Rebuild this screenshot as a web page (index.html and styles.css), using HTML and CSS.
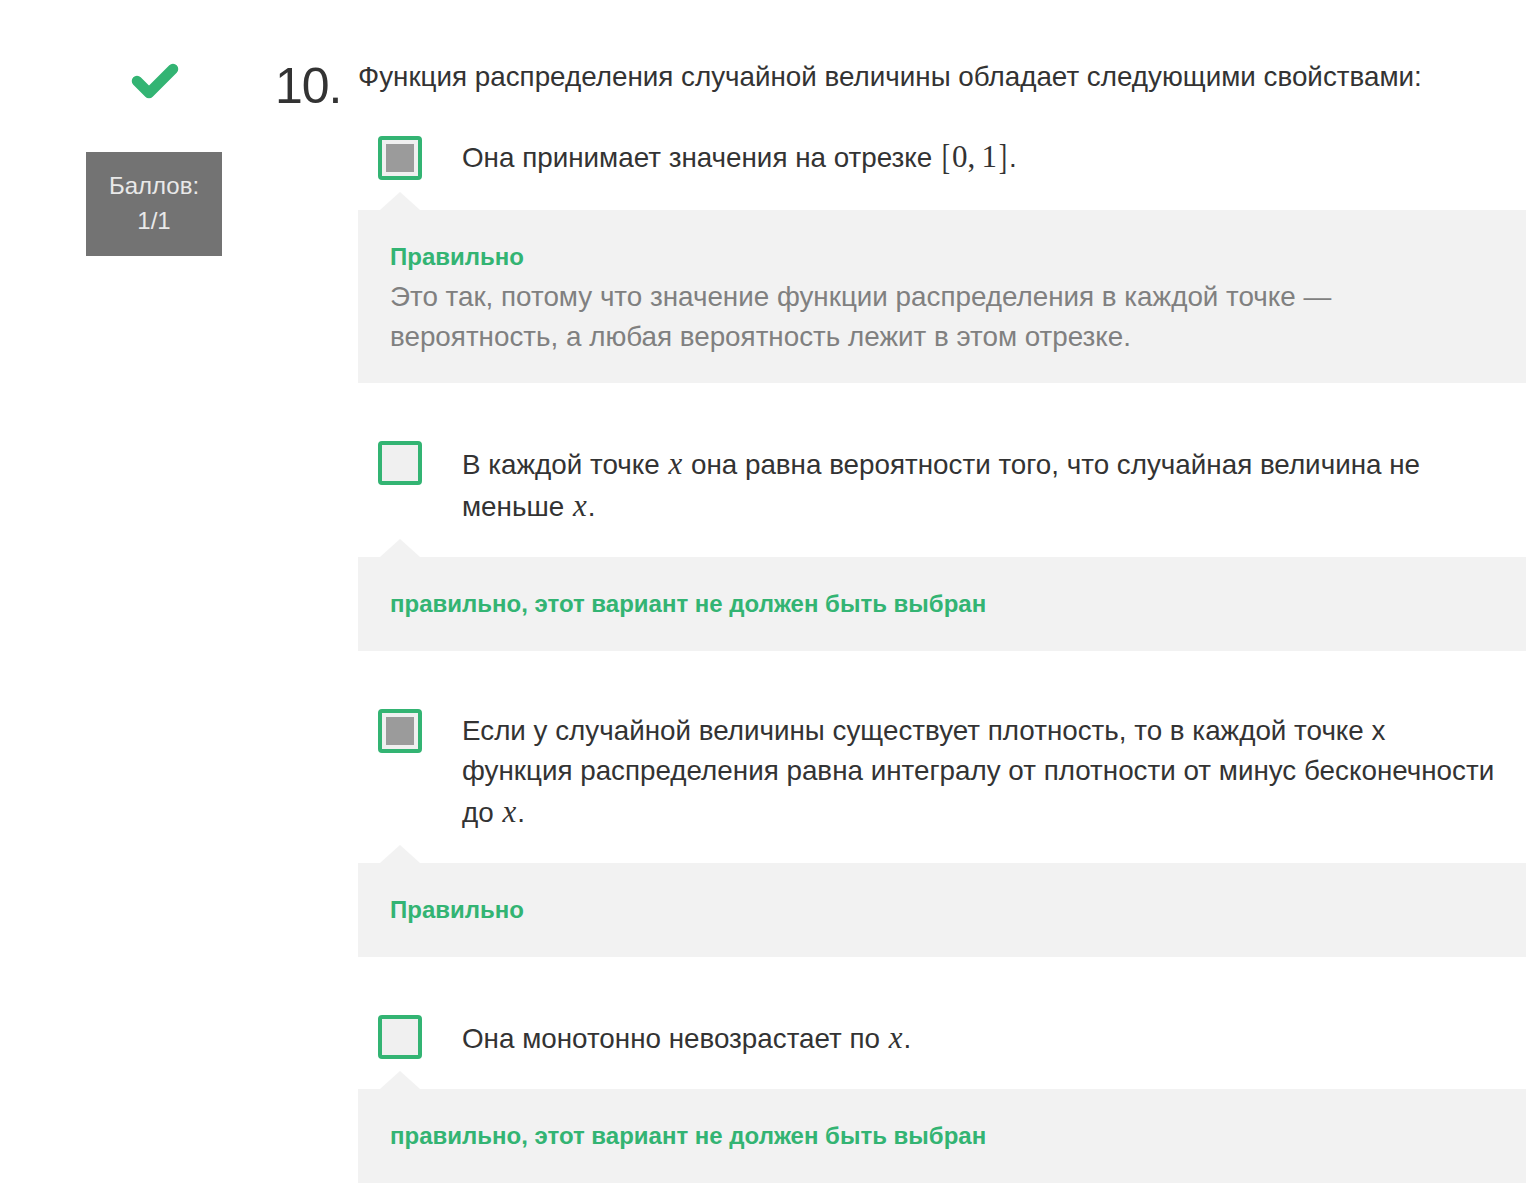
FILE: index.html
```html
<!DOCTYPE html>
<html lang="ru">
<head>
<meta charset="utf-8">
<title>Вопрос 10</title>
<link rel="stylesheet" href="styles.css">
</head>
<body>
<div class="page">
  <aside class="status">
    <svg class="check" width="48" height="38" viewBox="0 0 48 38" aria-hidden="true">
      <polyline points="6,18 18,30 42,6" fill="none" stroke="#33b473" stroke-width="10.5" stroke-linecap="round" stroke-linejoin="round"/>
    </svg>
    <div class="score">
      <div>Баллов:</div>
      <div>1/1</div>
    </div>
  </aside>

  <section class="question">
    <div class="qnum">10.</div>
    <div class="qbody">
      <div class="qtext">Функция распределения случайной величины обладает следующими свойствами:</div>
      <ul class="options">
        <li class="option">
          <div class="answer">
            <span class="box checked"></span>
            <div class="atext">Она принимает значения на отрезке <span class="math"><span class="br">[</span>0,&#8201;1<span class="br">]</span></span>.</div>
          </div>
          <div class="feedback">
            <div class="verdict">Правильно</div>
            <div class="explain">Это так, потому что значение функции распределения в каждой точке — вероятность, а любая вероятность лежит в этом отрезке.</div>
          </div>
        </li>
        <li class="option">
          <div class="answer">
            <span class="box"></span>
            <div class="atext">В каждой точке <span class="mi">x</span> она равна вероятности того, что случайная величина не меньше <span class="mi">x</span>.</div>
          </div>
          <div class="feedback">
            <div class="verdict">правильно, этот вариант не должен быть выбран</div>
          </div>
        </li>
        <li class="option">
          <div class="answer">
            <span class="box checked"></span>
            <div class="atext">Если у случайной величины существует плотность, то в каждой точке x функция распределения равна интегралу от плотности от минус бесконечности до <span class="mi">x</span>.</div>
          </div>
          <div class="feedback">
            <div class="verdict">Правильно</div>
          </div>
        </li>
        <li class="option">
          <div class="answer">
            <span class="box"></span>
            <div class="atext">Она монотонно невозрастает по <span class="mi">x</span>.</div>
          </div>
          <div class="feedback">
            <div class="verdict">правильно, этот вариант не должен быть выбран</div>
          </div>
        </li>
      </ul>
    </div>
  </section>
</div>
</body>
</html>
```

FILE: styles.css
```css
* { box-sizing: border-box; }

html, body {
  margin: 0;
  padding: 0;
  background: #ffffff;
}

body {
  font-family: "Liberation Sans", Arial, Helvetica, sans-serif;
  color: #333333;
}

.page {
  display: flex;
  align-items: flex-start;
  width: 1536px;
}

.status {
  width: 136px;
  margin-left: 86px;
  margin-top: 63px;
  display: flex;
  flex-direction: column;
  align-items: center;
}

.check {
  display: block;
  margin-left: 2px;
}

.score {
  margin-top: 51px;
  width: 136px;
  background: #737373;
  color: #e9e9e9;
  font-size: 24px;
  line-height: 35px;
  text-align: center;
  padding: 16px 0 18px;
}

.question {
  margin-left: 53px;
  margin-top: 57px;
  width: 1251px;
  display: grid;
  grid-template-columns: 68px 1fr;
  column-gap: 15px;
  align-items: start;
}

.qnum {
  font-size: 50px;
  line-height: 50px;
  margin-top: 4px;
  color: #333333;
  white-space: nowrap;
  letter-spacing: -1px;
}

.qtext {
  font-size: 27.8px;
  line-height: 40px;
  color: #333333;
}

.options {
  list-style: none;
  margin: 0;
  padding: 0;
}

.option {
  margin-top: 58px;
}

.option:first-child {
  margin-top: 39px;
}

.answer {
  display: flex;
  align-items: flex-start;
  padding-left: 20px;
}

.box {
  flex: none;
  width: 44px;
  height: 44px;
  border: 4px solid #33b473;
  border-radius: 4px;
  background: #f0f0f0;
  padding: 4px;
  display: block;
}

.box.checked::after {
  content: "";
  display: block;
  width: 100%;
  height: 100%;
  background: #9b9b9b;
}

.atext {
  margin-left: 40px;
  width: 1038px;
  padding-top: 2px;
  font-size: 27.8px;
  line-height: 40px;
  color: #333333;
}

.mi {
  font-family: "Liberation Serif", "Times New Roman", serif;
  font-style: italic;
  font-size: 31px;
  line-height: 42px;
  padding: 0 1px;
}

.math {
  font-family: "Liberation Serif", "Times New Roman", serif;
  font-size: 31px;
  line-height: 1;
}

.math .br {
  font-size: 36px;
  font-weight: 300;
  display: inline-block;
  transform: scaleX(0.7);
  vertical-align: -2px;
}

.feedback {
  position: relative;
  margin-top: 30px;
  background: #f2f2f2;
  padding: 30px 32px;
}

.feedback::before {
  content: "";
  position: absolute;
  top: -18px;
  left: 22px;
  width: 0;
  height: 0;
  border-left: 20px solid transparent;
  border-right: 20px solid transparent;
  border-bottom: 18px solid #f2f2f2;
}

.verdict {
  font-size: 24px;
  line-height: 34px;
  font-weight: bold;
  color: #33b473;
}

.explain {
  margin: 3px 0 -4px;
  font-size: 27.8px;
  line-height: 40px;
  color: #808080;
}
```
